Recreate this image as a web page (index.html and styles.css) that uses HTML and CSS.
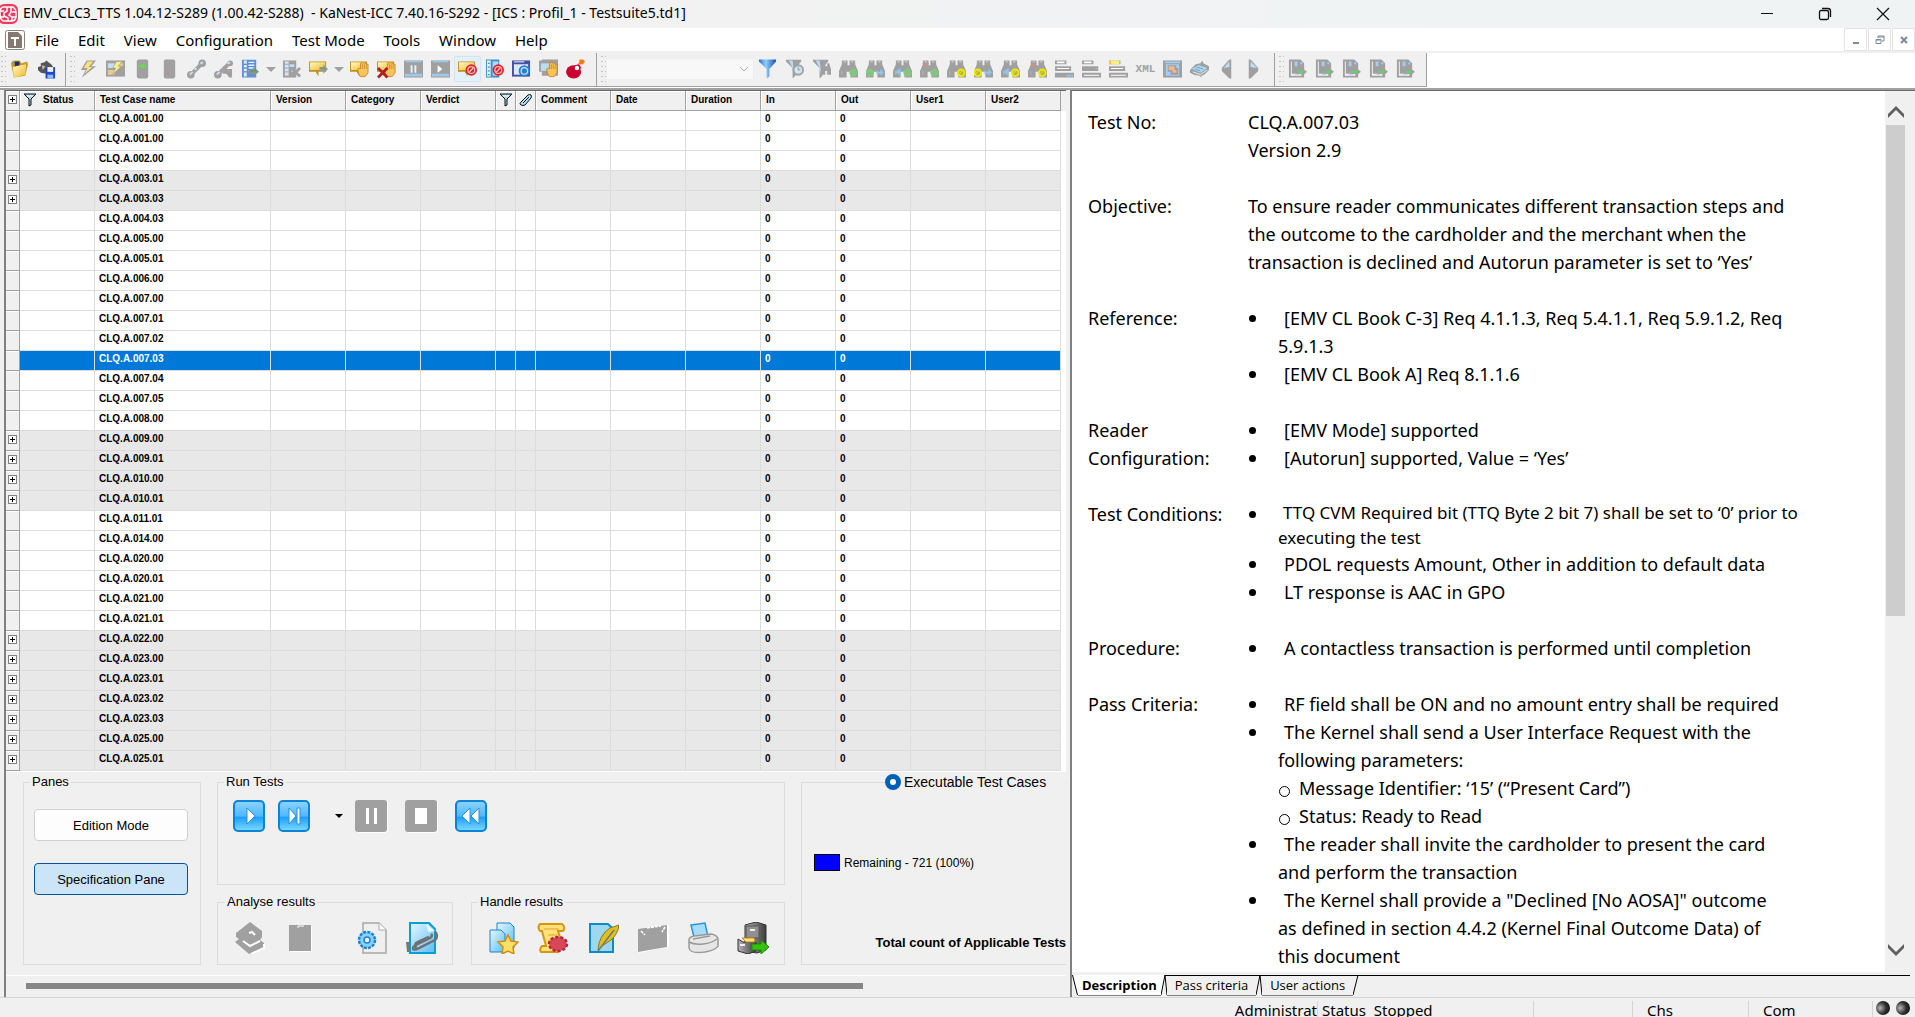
FILE: index.html
```html
<!DOCTYPE html>
<html lang="en">
<head>
    <meta charset="UTF-8">
    <meta name="viewport" content="width=device-width, initial-scale=1.0">
    <title>KaNest-ICC</title>
    <link rel="stylesheet" href="styles.css">
</head>
<body>
    <!-- Icon sprite -->
    <svg class="sprite" aria-hidden="true">
        <defs>
            <linearGradient id="gBlue" x1="0" y1="0" x2="0" y2="1">
                <stop offset="0" stop-color="#8fd4ff"/><stop offset=".5" stop-color="#4fb8ff"/><stop offset=".55" stop-color="#1e9ffb"/><stop offset="1" stop-color="#7fdcff"/>
            </linearGradient>
            <linearGradient id="gGold" x1="0" y1="0" x2="1" y2="1">
                <stop offset="0" stop-color="#fff9c4"/><stop offset="1" stop-color="#f2b92c"/>
            </linearGradient>
            <linearGradient id="gPage" x1="0" y1="0" x2="1" y2="1">
                <stop offset="0" stop-color="#e8f7ff"/><stop offset="1" stop-color="#58bdf5"/>
            </linearGradient>
            <linearGradient id="gMetal" x1="0" y1="0" x2="1" y2="0">
                <stop offset="0" stop-color="#b5b5b5"/><stop offset="1" stop-color="#3c3c3c"/>
            </linearGradient>
            <linearGradient id="gFunnel" x1="0" y1="0" x2="1" y2="0">
                <stop offset="0" stop-color="#2a6fc0"/><stop offset=".4" stop-color="#8fd0ff"/><stop offset="1" stop-color="#1b4fa8"/>
            </linearGradient>
            <radialGradient id="gLed" cx=".3" cy=".5" r=".7">
                <stop offset="0" stop-color="#b8b8b8"/><stop offset=".6" stop-color="#333"/><stop offset="1" stop-color="#111"/>
            </radialGradient>
        </defs>
        <symbol id="i-open" viewBox="0 0 20 20"><path d="M1 4l3-3h6l2 3 6-2 1 3-3 12-12 2z" fill="#c99b2e"/><path d="M3 8l14-3-1 11-12 3z" fill="url(#gGold)"/><path d="M5 2h5v4l-5 1z" fill="#1b2f66"/><path d="M2 2h2v2H2z" fill="#55a0d0"/></symbol>
        <symbol id="i-save" viewBox="0 0 20 20"><path d="M1 8l3-1V4l4-1 2-2 2 2 3 2 2 3-2 4-5 3-6-1-3-3z" fill="#555"/><path d="M5 6l4 1-3 4z" fill="#bbb"/><path d="M9 8h10v12H9z" fill="#1f49c8"/><path d="M11 8h6v5h-6z" fill="#eef4ff"/><path d="M11 16h6v4h-6z" fill="#8fb8ff"/></symbol>
        <symbol id="i-bolt" viewBox="0 0 20 20"><path d="M8 1h10l-5 6h5L3 19l4-8H2z" fill="#a0a0a0"/><path d="M9 2h6l-5 6h4L6 15l3-6H5z" fill="#fbe27a"/></symbol>
        <symbol id="i-boltwin" viewBox="0 0 20 20"><path d="M0 1h20v17H0z" fill="#a0a0a0"/><path d="M2 4h7v5H2z" fill="#bfe0fa"/><path d="M2 11h7v5H2zM14 4h4v3h-4z" fill="#e6cf85"/><path d="M11 2h6l-4 5h3l-9 9 3-7H7z" fill="#ffee88" stroke="#999" stroke-width=".6"/></symbol>
        <symbol id="i-devon" viewBox="0 0 20 20"><rect x="4" y="0" width="12" height="20" rx="2" fill="#a0a0a0"/><path d="M6 6h4V4l4 3-4 3V8H6z" fill="#5bea3c"/></symbol>
        <symbol id="i-devoff" viewBox="0 0 20 20"><rect x="4" y="0" width="12" height="20" rx="2" fill="#a0a0a0"/><path d="M6 14h4v1H6z" fill="#f08060"/></symbol>
        <symbol id="i-link" viewBox="0 0 20 20"><path d="M4 16L16 4" stroke="#a0a0a0" stroke-width="4"/><circle cx="4" cy="16" r="4" fill="#a0a0a0"/><circle cx="16" cy="4" r="4" fill="#a0a0a0"/><path d="M3 16l3-3M14 4l3-1M8 11l2-2" stroke="#d4dcf4" stroke-width="2"/></symbol>
        <symbol id="i-unlink" viewBox="0 0 20 20"><path d="M4 16L16 4" stroke="#a0a0a0" stroke-width="4"/><circle cx="4" cy="16" r="4" fill="#a0a0a0"/><circle cx="17" cy="4" r="3" fill="#a0a0a0"/><path d="M9 10h10v9h-3l-3-4H9z" fill="#a0a0a0"/><path d="M3 16l3-3M14 4l3-1" stroke="#d4dcf4" stroke-width="2"/><path d="M8 10l2 2M14 11l3 2" stroke="#f09090"/></symbol>
        <symbol id="i-list" viewBox="0 0 20 20"><path d="M1 0h15v19H1z" fill="#5d92d8"/><path d="M3 1h3v17H3z" fill="#dfeeff"/><path d="M3 5h3M3 9h3M3 13h3" stroke="#335fae"/><path d="M8 3h6M8 6h6M8 9h6M8 12h4" stroke="#e8f2ff" stroke-width="1.5"/></symbol>
        <symbol id="i-listrun" viewBox="0 0 20 20"><use href="#i-list"/><path d="M8 11h5V8l6 5-6 5v-3H8z" fill="#909090"/><path d="M10 12h5v-2l3 3" stroke="#38b040" fill="none"/></symbol>
        <symbol id="i-listx" viewBox="0 0 20 20"><path d="M1 1h14v18H1z" fill="#a0a0a0"/><path d="M3 2h4v15H3z" fill="#cfe6fa"/><path d="M3 5h4M3 9h4M3 13h4" stroke="#a0a0a0"/><path d="M8 5h5v3H8zM10 10h4v3h-4z" fill="#b8e0fa"/><path d="M10 9l9 9M19 9l-9 9" stroke="#a0a0a0" stroke-width="3"/></symbol>
        <symbol id="i-msg" viewBox="0 0 20 20"><path d="M0 2h18v11H10v5l-3-5H0z" fill="#c08f1d"/><path d="M1 3h16v8H1z" fill="url(#gGold)"/></symbol>
        <symbol id="i-msgrun" viewBox="0 0 20 20"><use href="#i-msg"/><path d="M11 8h4V5l5 5-5 5v-3h-4z" fill="#9a9a9a"/><path d="M12 9h4l2 2" stroke="#42b048" fill="none"/></symbol>
        <symbol id="i-hand" viewBox="0 0 20 20"><path d="M9 15l-1-5 2-1 1 1V4l2-1 1 1 2-1 1 2 2 0v9l-3 4h-5z" fill="#f8c45a" stroke="#c07818" stroke-width=".8"/><path d="M13 5v5M15 5v5M17 6v4" stroke="#c07818" stroke-width=".7"/></symbol>
        <symbol id="i-msghand" viewBox="0 0 20 20"><use href="#i-msg"/><use href="#i-hand"/></symbol>
        <symbol id="i-msghandx" viewBox="0 0 20 20"><use href="#i-msg"/><use href="#i-hand"/><path d="M1 9l10 10M11 9L1 19" stroke="#b02020" stroke-width="3"/></symbol>
        <symbol id="i-pausebox" viewBox="0 0 20 20"><path d="M0 1h20v18H0z" fill="#a0a0a0"/><path d="M2 1h16v2H2zM1 15h18v3H1z" fill="#9fc8ea"/><path d="M7 6h2v8H7zM11 6h2v8h-2z" fill="#e8f4fc"/></symbol>
        <symbol id="i-playbox" viewBox="0 0 20 20"><path d="M0 1h20v18H0z" fill="#a0a0a0"/><path d="M2 1h16v2H2zM1 15h18v3H1z" fill="#9fc8ea"/><path d="M7 6l5 4-5 4z" fill="#fff"/></symbol>
        <symbol id="i-no" viewBox="0 0 20 20"><circle cx="14" cy="11" r="6" fill="#d8242c"/><circle cx="14" cy="11" r="3.6" fill="none" stroke="#ffb8b8" stroke-width="1.3"/><path d="M12 13l4-4" stroke="#ffc8c8" stroke-width="1.3"/></symbol>
        <symbol id="i-msgstop" viewBox="0 0 20 20"><use href="#i-msg"/><use href="#i-no"/></symbol>
        <symbol id="i-liststop" viewBox="0 0 20 20"><path d="M1 0h14v19H1z" fill="#3f90c8"/><path d="M2 1h4v17H2z" fill="#d8f0ff"/><path d="M3 4h2M3 8h2M3 12h2M3 16h2" stroke="#2a70a8"/><path d="M8 2h6v15H8z" fill="#a8dcf8"/><use href="#i-no"/></symbol>
        <symbol id="i-wingear" viewBox="0 0 20 20"><path d="M0 1h19v17H0z" fill="#4450a0"/><path d="M2 5h15v11H2z" fill="#dfe8fb"/><path d="M2 2h11v1H2z" fill="#fff"/><circle cx="13" cy="12" r="6" fill="#2a7fd4"/><circle cx="13" cy="12" r="3.4" fill="none" stroke="#bfe6ff" stroke-width="1.3"/></symbol>
        <symbol id="i-winhand" viewBox="0 0 20 20"><path d="M0 1h17v12H0zM3 0h17v17H3z" fill="#a0a0a0"/><path d="M2 4h14v8H2z" fill="#b8dcf0"/><use href="#i-hand"/></symbol>
        <symbol id="i-bomb" viewBox="0 0 20 20"><ellipse cx="8" cy="13" rx="8" ry="7" fill="#cc0030"/><path d="M9 6l5-1 2 4-4 3z" fill="#cc0030"/><circle cx="11.500" cy="9" r="2.300" fill="#fff"/><path d="M12 6l3-3" stroke="#c03020"/><path d="M14 0h4l2 2-2 3h-4z" fill="#ff7a00"/></symbol>
        <symbol id="i-funnel" viewBox="0 0 20 20"><path d="M1 0h18v2l-7 8v8l-3 2v-10L1 2z" fill="url(#gFunnel)"/></symbol>
        <symbol id="i-gfunnel" viewBox="0 0 20 20"><path d="M1 0h16v2l-6 7v8l-3 3V9L1 2z" fill="#a0a0a0"/><path d="M4 1h4l2 15-2-7z" fill="#b4dcf8"/></symbol>
        <symbol id="i-funneleye" viewBox="0 0 20 20"><use href="#i-gfunnel"/><circle cx="14" cy="11" r="6" fill="#a0a0a0"/><circle cx="14" cy="11" r="4" fill="#cfe6f6"/><path d="M14 8v3h2" stroke="#7a9ab0" fill="none"/></symbol>
        <symbol id="i-funnelbino" viewBox="0 0 20 20"><use href="#i-gfunnel"/><path d="M10 7l2-3h2v3h2V4h2l2 6v6h-4v-4h-2v4h-4z" fill="#a0a0a0"/></symbol>
        <symbol id="i-bino" viewBox="0 0 20 20"><path d="M0 12l3-7V1h6v5h2V1h6v4l3 7v7h-8v-6H8v6H0z" fill="#a0a0a0"/><path d="M5 2h2v1H5zM13 2h2v1h-2z" fill="#f0f0f0"/><path d="M3 12v4M12 12v5" stroke="#bcbcbc"/></symbol>
        <symbol id="i-green" viewBox="0 0 20 20"><circle cx="15" cy="14" r="3.500" fill="#a8a8a8" stroke="#66e060" stroke-width="1.500" stroke-dasharray="4 1"/><path d="M13 13h3v3" stroke="#66e060" fill="none"/></symbol>
        <symbol id="i-yellow" viewBox="0 0 20 20"><circle cx="15" cy="14" r="3.500" fill="#b8b060" stroke="#ecec00" stroke-width="2"/><path d="M13 15l3-3" stroke="#ecec00" fill="none"/></symbol>
        <symbol id="i-bino1" viewBox="0 0 20 20"><use href="#i-bino"/><use href="#i-green"/></symbol>
        <symbol id="i-bino2" viewBox="0 0 20 20"><use href="#i-bino"/><use href="#i-green" x="-11"/><path d="M11 13h4v-3l4 4-4 3v-2h-4z" fill="#8cc4f4"/></symbol>
        <symbol id="i-bino3" viewBox="0 0 20 20"><use href="#i-bino"/><path d="M2 13l6-4v8z" fill="#8cc4f4"/><use href="#i-green"/></symbol>
        <symbol id="i-bino4" viewBox="0 0 20 20"><use href="#i-bino"/><path d="M3 4l3 3M6 4L3 7M9 4l-2 3" stroke="#f08080"/><use href="#i-green"/></symbol>
        <symbol id="i-bino5" viewBox="0 0 20 20"><use href="#i-bino"/><use href="#i-yellow"/></symbol>
        <symbol id="i-bino6" viewBox="0 0 20 20"><use href="#i-bino"/><use href="#i-yellow" x="-11"/><path d="M11 13h4v-3l4 4-4 3v-2h-4z" fill="#8cc4f4"/></symbol>
        <symbol id="i-bino7" viewBox="0 0 20 20"><use href="#i-bino"/><path d="M2 13l6-4v8z" fill="#8cc4f4"/><use href="#i-yellow"/></symbol>
        <symbol id="i-bino8" viewBox="0 0 20 20"><use href="#i-bino"/><path d="M3 4l3 3M6 4L3 7M9 4l-2 3" stroke="#f08080"/><use href="#i-yellow"/></symbol>
        <symbol id="i-bars" viewBox="0 0 20 20"><path d="M0 1h12v4H0zM0 7h17v5H0zM0 14h20v5H0z" fill="#a0a0a0"/><path d="M2 2h8v2H2zM2 9h13v1H2zM2 16h16v1H2z" fill="#fff"/></symbol>
        <symbol id="i-bars1" viewBox="0 0 20 20"><use href="#i-bars"/><path d="M0 15h19v3H0z" fill="#a0a0a0"/><path d="M12 16h7v2h-7z" fill="#8cc4f4"/></symbol>
        <symbol id="i-bars2" viewBox="0 0 20 20"><use href="#i-bars"/><path d="M0 8h17v3H0z" fill="#a0a0a0"/><path d="M14 9h2v2h-2z" fill="#80d080"/></symbol>
        <symbol id="i-bars3" viewBox="0 0 20 20"><use href="#i-bars"/><path d="M1 1h10v4H1z" fill="#ffee80"/><path d="M0 1h2v4H0z" fill="#f8c050"/></symbol>
        <symbol id="i-wins" viewBox="0 0 20 20"><path d="M0 1h20v18H0z" fill="#a0a0a0"/><path d="M2 2h16v2H2zM3 5h14v12H3z" fill="#9cd0fc"/><path d="M5 6h9v7H5zM8 9h8v7H8z" fill="#a0a0a0"/><path d="M6 7h6v4H6zM10 11h4v3h-4z" fill="#f4b888"/></symbol>
        <symbol id="i-book" viewBox="0 0 20 20"><path d="M0 11l6-6 5-1 2-3 1 3 6 3v4l-5 5-3 1v2l-2-2-6-1-4-2z" fill="#a0a0a0"/><path d="M2 10l7-4 9 3-7 5z" fill="#a8dcfc"/><path d="M3 13l8 3 7-5" stroke="#e8f6ff" fill="none"/><path d="M7 8l7 2M5 10l6 2" stroke="#7898a8"/></symbol>
        <symbol id="i-prev" viewBox="0 0 20 20"><path d="M15 0v20h-2L5 12V9l8-9z" fill="#a0a0a0"/><path d="M13 2v6L7 9z" fill="#b8e0fc"/></symbol>
        <symbol id="i-next" viewBox="0 0 20 20"><path d="M5 0v20h2l8-8V9L7 0z" fill="#a0a0a0"/><path d="M7 2v6l7 1z" fill="#b8e0fc"/></symbol>
        <symbol id="i-doc" viewBox="0 0 20 20"><path d="M1 0h12l4 4v15H1z" fill="#a0a0a0"/><path d="M3 2h1v15H3zM4 15h10v2H4z" fill="#f4f4f4"/><path d="M7 2h3v5H7zM13 3h2v2h-2zM7 15h5v1H7z" fill="#a4cdf4"/><path d="M9 11h6V9l5 4-5 4v-2H9z" fill="#a0a0a0"/><path d="M10 12h4v-1l3 2-3 2v-1h-4z" fill="#5cd860"/></symbol>
        <symbol id="i-hfunnel" viewBox="0 0 14 14"><path d="M1 1h12L8 6v6l-2 1V6z" fill="#9ed8ec" stroke="#111"/><path d="M4 3h6" stroke="#fff"/></symbol>
        <symbol id="i-hclip" viewBox="0 0 14 14"><path d="M2 9l7-7q2-1 3 0t0 3l-6 7q-2 1-4 0t0-3z" fill="#a8dff5" stroke="#111"/><path d="M4 10l6-6" stroke="#111"/></symbol>
    </svg>

    <header class="titlebar">
        <svg class="app-icon" viewBox="0 0 20 20"><rect x="-2" y="0" width="20" height="20" rx="6" fill="#f5385f"/><path d="M3 3h10q3 2 3 6v4q-1 4-4 4H3q-3-2-3-6V8q0-4 3-5M7 3v4l-3 2v3l4 2v3M11 3v5l-2 3 3 2v4M0 7h4M12 8h4M0 13h4M12 13h4" fill="none" stroke="#fff" stroke-width="1.500"/></svg>
        <h1>EMV_CLC3_TTS 1.04.12-S289 (1.00.42-S288)&nbsp; - KaNest-ICC 7.40.16-S292 - [ICS : Profil_1 - Testsuite5.td1]</h1>
        <div class="win-buttons">
            <button aria-label="Minimize"><svg viewBox="0 0 14 14"><path d="M1 6.500h12" stroke="#111"/></svg></button>
            <button aria-label="Restore"><svg viewBox="0 0 14 14"><rect x="1.500" y="3.500" width="9" height="9" rx="1.500" fill="none" stroke="#111" stroke-width="1.300"/><path d="M4 1.500h6q2.500 0 2.500 2.500v6" fill="none" stroke="#111" stroke-width="1.300"/></svg></button>
            <button aria-label="Close"><svg viewBox="0 0 14 14"><path d="M1 1l12 12M13 1L1 13" stroke="#111" stroke-width="1.200"/></svg></button>
        </div>
    </header>

    <nav class="menubar">
        <svg class="doc-icon" viewBox="0 0 20 20"><rect x=".5" y=".5" width="19" height="19" rx="2" fill="#fff" stroke="#8a7f7a"/><path d="M3 2h10l4 4v12H3z" fill="#857870"/><path d="M6 7h8v2h-3v7H9V9H6z" fill="#fff"/></svg>
        <a href="#">File</a>
        <a href="#">Edit</a>
        <a href="#">View</a>
        <a href="#">Configuration</a>
        <a href="#">Test Mode</a>
        <a href="#">Tools</a>
        <a href="#">Window</a>
        <a href="#">Help</a>
        <div class="mdi-buttons">
            <button aria-label="Minimize document"><svg viewBox="0 0 10 10"><path d="M2 7h6v2H2z" fill="#7d8b99"/></svg></button>
            <button aria-label="Restore document"><svg viewBox="0 0 10 10"><path d="M3 3V1h6v5H7M3 2h6M1 4.500h5v4H1zM1 5h5" fill="none" stroke="#7d8b99"/></svg></button>
            <button aria-label="Close document"><svg viewBox="0 0 10 10"><path d="M2 2l6 6M8 2L2 8" stroke="#7d8b99" stroke-width="2"/></svg></button>
        </div>
    </nav>

    <div class="toolbars" id="toolbars">
        <div class="toolbar" data-icons="open save"></div>
        <div class="toolbar" data-icons="bolt boltwin devon devoff link unlink listrun | listx msgrun | msghand msghandx pausebox playbox msgstop* liststop wingear winhand bomb"></div>
        <div class="toolbar" data-icons="combo funnel funneleye funnelbino bino1 bino2 bino3 bino4 bino5 bino6 bino7 bino8 bars1 bars2 bars3 xml wins book prev next"></div>
        <div class="toolbar" data-icons="doc doc doc doc doc"></div>
    </div>

    <main class="workspace">
        <section class="left-pane">
            <div class="table-wrap">
                <table class="cases">
                    <colgroup>
                        <col class="c-exp"><col class="c-std"><col class="c-name"><col class="c-std"><col class="c-std"><col class="c-std"><col class="c-ico"><col class="c-ico"><col class="c-std"><col class="c-std"><col class="c-std"><col class="c-std"><col class="c-std"><col class="c-std"><col class="c-std">
                    </colgroup>
                    <thead>
                        <tr>
                            <th class="exp"><button class="plus" aria-label="Expand all"></button></th>
                            <th class="status"><svg><use href="#i-hfunnel"/></svg>Status</th>
                            <th>Test Case name</th>
                            <th>Version</th>
                            <th>Category</th>
                            <th>Verdict</th>
                            <th class="ico"><svg><use href="#i-hfunnel"/></svg></th>
                            <th class="ico"><svg><use href="#i-hclip"/></svg></th>
                            <th>Comment</th>
                            <th>Date</th>
                            <th>Duration</th>
                            <th>In</th>
                            <th>Out</th>
                            <th>User1</th>
                            <th>User2</th>
                        </tr>
                    </thead>
                    <tbody id="caseRows"></tbody>
                </table>
            </div>

            <div class="controls">
                <fieldset class="panes">
                    <legend>Panes</legend>
                    <button class="pane-btn">Edition Mode</button>
                    <button class="pane-btn active">Specification Pane</button>
                </fieldset>

                <div class="middle">
                    <fieldset class="run">
                        <legend>Run Tests</legend>
                        <button class="run-btn" aria-label="Run"><svg viewBox="0 0 32 32"><rect x="1" y="1" width="30" height="30" rx="4" fill="url(#gBlue)" stroke="#0a84d8" stroke-width="2"/><path d="M14 8v16l8-8z" fill="#fff" stroke="#2a8fd8"/></svg></button>
                        <button class="run-btn" aria-label="Run to end"><svg viewBox="0 0 32 32"><rect x="1" y="1" width="30" height="30" rx="4" fill="url(#gBlue)" stroke="#0a84d8" stroke-width="2"/><path d="M11 8v16l7-8zM19 8h3v16h-3z" fill="#fff" stroke="#2a8fd8"/></svg></button>
                        <button class="run-drop" aria-label="Run options"><svg viewBox="0 0 8 5"><path d="M0 0h8L4 4z" fill="#000"/></svg></button>
                        <button class="run-btn" aria-label="Pause"><svg viewBox="0 0 32 32"><rect x="1" y="1" width="32" height="32" rx="4" fill="#fff"/><rect width="32" height="32" rx="3" fill="#a0a0a0"/><path d="M11 8h3v16h-3zM19 8h3v16h-3z" fill="#fff"/></svg></button>
                        <button class="run-btn wide" aria-label="Stop"><svg viewBox="0 0 32 32"><rect x="1" y="1" width="32" height="32" rx="4" fill="#fff"/><rect width="32" height="32" rx="3" fill="#a0a0a0"/><path d="M10 8h12v16H10z" fill="#fff"/></svg></button>
                        <button class="run-btn wide" aria-label="Rewind"><svg viewBox="0 0 32 32"><rect x="1" y="1" width="30" height="30" rx="4" fill="url(#gBlue)" stroke="#0a84d8" stroke-width="2"/><path d="M15 8v16l-8-8zM24 8v16l-8-8z" fill="#fff" stroke="#2a8fd8"/></svg></button>
                    </fieldset>
                    <div class="results">
                        <fieldset class="analyse">
                            <legend>Analyse results</legend>
                            <button class="res-btn" aria-label="Compare logs"><svg viewBox="0 0 32 32"><path d="M2 11L16 0l12 9v6l-2 3 4 3v5L15 32 1 20l4-3-3-2z" fill="#a0a0a0"/><path d="M9 19l7 5 10-5M17 32l13-6v-4M15 11l3-1 3 3" fill="none" stroke="#fff" stroke-width="2"/></svg></button>
                            <button class="res-btn" aria-label="Clipboard"><svg viewBox="0 0 32 32"><path d="M6 4h22v26H6z" fill="#fff"/><path d="M5 3h22v26H5z" fill="#a0a0a0"/><path d="M14 6V4h6" fill="none" stroke="#fff"/></svg></button>
                            <button class="res-btn gap" aria-label="Log settings"><svg viewBox="0 0 32 32"><path d="M7 1h16l7 7v23H7z" fill="#efefef" stroke="#a8a8a8" stroke-width="1.500"/><path d="M23 1v7h7" fill="#fff" stroke="#a8a8a8"/><circle cx="11" cy="18" r="8" fill="#8ad0fb" stroke="#1b84cf" stroke-width="2.500" stroke-dasharray="3 1.200"/><circle cx="11" cy="18" r="3" fill="#eef" stroke="#1b84cf" stroke-width="1.500"/></svg></button>
                            <button class="res-btn" aria-label="Attach"><svg viewBox="0 0 32 32"><path d="M4 1h19l6 6v24H4z" fill="url(#gPage)" stroke="#0a9fd4" stroke-width="2"/><path d="M20 2l2 8 7-1z" fill="#e8f8ff"/><path d="M8 24l16-8q3-2 1-4M8 24q-3 5 3 3l18-9q4-4 0-8M10 26q-2-5 2-6l11-5" fill="none" stroke="#707070" stroke-width="2.500"/><path d="M0 20h3v10H1z" fill="#777"/></svg></button>
                        </fieldset>
                        <fieldset class="handle">
                            <legend>Handle results</legend>
                            <button class="res-btn" aria-label="New report"><svg viewBox="0 0 32 32"><path d="M10 1h13l4 4v21H10z" fill="url(#gPage)" stroke="#1b84cf"/><path d="M3 8h11l4 4v18H3z" fill="url(#gPage)" stroke="#1b84cf"/><path d="M21 13l3 6 7 1-5 5 1 7-6-3-6 3 1-7-5-5 7-1z" fill="#ffe066" stroke="#d08c10" stroke-width="1.500"/></svg></button>
                            <button class="res-btn" aria-label="Certificate"><svg viewBox="0 0 32 32"><path d="M3 2h22q4 3 1 7h-5l4 12-4 9H4q-2-3 1-6h4L5 9H3q-3-4 0-7z" fill="#ffe27a" stroke="#d99510" stroke-width="2"/><path d="M7 7h15M11 13h9M12 18h6" stroke="#e0a028"/><ellipse cx="21" cy="22" rx="9" ry="7" fill="#d84858" stroke="#b02840" stroke-width="2.500" stroke-dasharray="3 2"/></svg></button>
                            <button class="res-btn" aria-label="Edit"><svg viewBox="0 0 32 32"><path d="M3 2h18l5 5v23H3z" fill="#9ed8ee" stroke="#0a8cc4" stroke-width="2"/><path d="M11 28Q12 13 23 6l9-3q-1 9-8 15l-9 6z" fill="#e0c020" stroke="#8a7a20"/><path d="M11 29L27 8" stroke="#777" stroke-width="1.500"/></svg></button>
                            <button class="res-btn" aria-label="Mail"><svg viewBox="0 0 32 32"><path d="M2 8l30-5v22L2 31z" fill="#fff"/><path d="M1 7l29-4v22L1 30z" fill="#a0a0a0"/><path d="M4 9l4 4M28 5l-3 5M10 6l14-2" stroke="#fff" stroke-width="1.500" stroke-dasharray="3 1"/></svg></button>
                            <button class="res-btn" aria-label="Print"><svg viewBox="0 0 32 32"><path d="M4 3l14-2 3 14H7z" fill="#a5dcff" stroke="#2a94d8" stroke-width="1.500"/><path d="M2 18q0-3 5-4l17-2q6 1 7 5v7q-2 4-13 6-15 2-16-4z" fill="#e6e6e6" stroke="#999" stroke-width="1.500"/><path d="M2 20q5 3 14 2t14-5M6 17l17-3" fill="none" stroke="#999" stroke-width="1.500"/></svg></button>
                            <button class="res-btn" aria-label="Archive"><svg viewBox="0 0 32 32"><path d="M8 3l11-3 10 3v25l-9 3-12-2z" fill="url(#gMetal)" stroke="#333"/><path d="M9 4h13v12H9z" fill="#909090" stroke="#555"/><path d="M1 17l5 3h13v9l-8 3-10-3z" fill="url(#gMetal)" stroke="#333"/><path d="M5 16h12l1 4H9z" fill="#ffe27a" stroke="#c08c20"/><path d="M3 23h5M13 8h5" stroke="#eee" stroke-width="2"/><path d="M15 22h9v-4l8 7-8 7v-4h-9z" fill="#37c211" stroke="#1d8a08"/></svg></button>
                        </fieldset>
                    </div>
                </div>

                <fieldset class="summary">
                    <legend><input type="radio" id="execCases" name="scope" checked><label for="execCases">Executable Test Cases</label></legend>
                    <p class="remaining"><span class="swatch"></span>Remaining - 721 (100%)</p>
                    <p class="total">Total count of Applicable Tests</p>
                </fieldset>
            </div>

            <div class="hscroll"><div class="hthumb"></div></div>
        </section>

        <section class="right-pane">
            <div class="doc-area">
                <dl class="spec">
                    <dt>Test No:</dt>
                    <dd>CLQ.A.007.03<br>Version 2.9</dd>
                    <dt>Objective:</dt>
                    <dd>To ensure reader communicates different transaction steps and<br>the outcome to the cardholder and the merchant when the<br>transaction is declined and Autorun parameter is set to ‘Yes’</dd>
                    <dt>Reference:</dt>
                    <dd>
                        <ul>
                            <li>[EMV CL Book C-3] Req 4.1.1.3, Req 5.4.1.1, Req 5.9.1.2, Req<br>5.9.1.3</li>
                            <li>[EMV CL Book A] Req 8.1.1.6</li>
                        </ul>
                    </dd>
                    <dt>Reader<br>Configuration:</dt>
                    <dd>
                        <ul>
                            <li>[EMV Mode] supported</li>
                            <li>[Autorun] supported, Value = ‘Yes’</li>
                        </ul>
                    </dd>
                    <dt>Test Conditions:</dt>
                    <dd>
                        <ul>
                            <li class="small">TTQ CVM Required bit (TTQ Byte 2 bit 7) shall be set to ‘0’ prior to<br>executing the test</li>
                            <li>PDOL requests Amount, Other in addition to default data</li>
                            <li>LT response is AAC in GPO</li>
                        </ul>
                    </dd>
                    <dt>Procedure:</dt>
                    <dd>
                        <ul>
                            <li>A contactless transaction is performed until completion</li>
                        </ul>
                    </dd>
                    <dt>Pass Criteria:</dt>
                    <dd>
                        <ul>
                            <li>RF field shall be ON and no amount entry shall be required</li>
                            <li>The Kernel shall send a User Interface Request with the<br>following parameters:
                                <ul class="sub">
                                    <li>Message Identifier: ‘15’ (“Present Card”)</li>
                                    <li>Status: Ready to Read</li>
                                </ul>
                            </li>
                            <li>The reader shall invite the cardholder to present the card<br>and perform the transaction</li>
                            <li>The Kernel shall provide a "Declined [No AOSA]" outcome<br>as defined in section 4.4.2 (Kernel Final Outcome Data) of<br>this document</li>
                        </ul>
                    </dd>
                </dl>
                <div class="vscroll">
                    <button aria-label="Scroll up"><svg viewBox="0 0 18 12"><path d="M1 8l8-8 8 8v4L9 4l-8 8z" fill="#606060"/></svg></button>
                    <div class="vtrack"><div class="vthumb"></div></div>
                    <button class="down" aria-label="Scroll down"><svg viewBox="0 0 18 12"><path d="M1 4l8 8 8-8V0L9 8 1 0z" fill="#606060"/></svg></button>
                </div>
            </div>
            <div class="tabs">
                <svg class="slant first" viewBox="0 0 6 21"><path d="M0 0h6v21z" fill="#fff"/><path d="M.5 0l5 20" stroke="#000" fill="none"/></svg>
                <a href="#" class="tab active">Description</a>
                <svg class="slant" viewBox="0 0 6 21"><path d="M0 0h4L0 20z" fill="#fff"/><path d="M0 20L4 0l2 20M4 .5h2" stroke="#000" fill="none"/></svg>
                <a href="#" class="tab">Pass criteria</a>
                <svg class="slant" viewBox="0 0 6 21"><path d="M0 20L4 0l2 20M0 .5h6" stroke="#000" fill="none"/></svg>
                <a href="#" class="tab">User actions</a>
                <svg class="slant" viewBox="0 0 6 21"><path d="M0 20L5 0M0 .5h6" stroke="#000" fill="none"/></svg>
                <span class="tab-rest"></span>
            </div>
        </section>
    </main>

    <footer class="statusbar">
        <span class="s-user">Administrat</span>
        <span class="s-state">Status&nbsp; Stopped</span>
        <span class="s-empty"></span>
        <span class="s-chs">Chs</span>
        <span class="s-com">Com</span>
        <span class="s-leds"><svg viewBox="0 0 34 14"><circle cx="7" cy="7" r="7" fill="url(#gLed)"/><circle cx="27" cy="7" r="7" fill="url(#gLed)"/></svg></span>
    </footer>

    <script>
        // Test cases of the current suite, "+" marks the ones that can be expanded
        const cases = [
            "001.00", "001.00", "002.00", "+003.01", "+003.03", "004.03", "005.00", "005.01",
            "006.00", "007.00", "007.01", "007.02", "007.03", "007.04", "007.05", "008.00",
            "+009.00", "+009.01", "+010.00", "+010.01", "011.01", "014.00", "020.00", "020.01",
            "021.00", "021.01", "+022.00", "+023.00", "+023.01", "+023.02", "+023.03", "+025.00", "+025.01"
        ];
        const selected = "007.03";

        function renderRows() {
            const tbody = document.getElementById("caseRows");
            cases.forEach(item => {
                const group = item.startsWith("+");
                const id = item.replace("+", "");
                const row = document.createElement("tr");
                if (group) row.className = "group";
                if (id === selected) row.className = "selected";
                row.innerHTML = `
                    <td class="exp">${group ? '<button class="plus" aria-label="Expand"></button>' : ''}</td>
                    <td></td><td>CLQ.A.${id}</td>
                    <td></td><td></td><td></td><td></td><td></td><td></td><td></td><td></td>
                    <td>0</td><td>0</td><td></td><td></td>`;
                tbody.appendChild(row);
            });
        }

        function renderToolbars() {
            document.querySelectorAll(".toolbar").forEach(bar => {
                let html = '<span class="grip"></span>';
                bar.dataset.icons.split(" ").forEach(name => {
                    if (name === "|") {
                        html += '<button class="drop" aria-label="More"></button>';
                    } else if (name === "combo") {
                        html += '<div class="filter-box"><select class="filter" aria-label="Filter"><option></option></select><svg viewBox="0 0 10 6"><path d="M1 1l4 4 4-4" fill="none" stroke="#b0b0b0"/></svg></div>';
                    } else if (name === "xml") {
                        html += '<button class="tool xml">XML</button>';
                    } else {
                        const on = name.endsWith("*");
                        const id = name.replace("*", "");
                        html += `<button class="tool${on ? ' on' : ''}" aria-label="${id}"><svg><use href="#i-${id}"/></svg></button>`;
                    }
                });
                bar.innerHTML = html;
            });
        }

        renderRows();
        renderToolbars();
    </script>
</body>
</html>
```
FILE: styles.css
```css
* {
    box-sizing: border-box;
}

body {
    margin: 0;
    height: 100vh;
    display: flex;
    flex-direction: column;
    overflow: hidden;
    background: #f0f0f0;
    color: #000;
    font-family: "Liberation Sans", Arial, sans-serif;
    font-size: 13px;
}

button {
    border: none;
    background: none;
    padding: 0;
    font-family: inherit;
    font-size: inherit;
    color: inherit;
}

svg {
    display: block;
}

.sprite {
    position: absolute;
    width: 0;
    height: 0;
}

/* Title bar */
.titlebar {
    display: flex;
    align-items: center;
    height: 28px;
    flex: none;
    background: linear-gradient(to right, #f3f2f2, #f1f2f3 60%, #eff3f4 75%);
    font-family: "Noto Sans", "Open Sans", sans-serif;
}

.app-icon {
    width: 20px;
    height: 20px;
    margin-right: 3px;
}

.titlebar h1 {
    margin: 0;
    font-size: 14px;
    line-height: 26px;
    height: 28px;
    font-weight: normal;
    white-space: nowrap;
}

.win-buttons {
    margin-left: auto;
    display: flex;
    padding-right: 3px;
}

.win-buttons button {
    width: 58px;
    height: 26px;
    display: flex;
    align-items: center;
    justify-content: center;
}

.win-buttons svg {
    width: 14px;
    height: 14px;
}

/* Menu */
.menubar {
    display: flex;
    align-items: center;
    height: 25px;
    flex: none;
    padding-left: 5px;
    background: #fff;
    border-bottom: 2px solid #f0f0f0;
    font-family: "Noto Sans", "Open Sans", sans-serif;
    font-size: 15px;
    gap: 19px;
}

.menubar a {
    color: #000;
    text-decoration: none;
    line-height: 22px;
}

.doc-icon {
    width: 20px;
    height: 20px;
    margin-right: -9px;
}

.mdi-buttons {
    margin-left: auto;
    display: flex;
    gap: 1px;
}

.mdi-buttons button {
    width: 23px;
    height: 23px;
    border: 1px solid #e3e3e3;
    display: flex;
    align-items: center;
    justify-content: center;
}

.mdi-buttons svg {
    width: 10px;
    height: 10px;
}

/* Toolbars */
.toolbars {
    display: flex;
    height: 35px;
    flex: none;
    background: #fff;
}

.toolbar {
    display: flex;
    align-items: center;
    height: 34px;
    padding: 0 7px 1px 3px;
    background: #f0f0f0;
    border-right: 1px solid #a0a0a0;
    border-bottom: 1px solid #a0a0a0;
}

.toolbar:first-child {
    padding-left: 0;
    padding-right: 5px;
}

.grip {
    width: 6px;
    height: 30px;
    background: radial-gradient(circle, #c4c4c4 1px, transparent 1px) 0 0 / 4px 5px;
}

.tool {
    width: 27px;
    height: 26px;
    display: flex;
    align-items: center;
    justify-content: center;
}

.tool svg {
    width: 19px;
    height: 20px;
}

.tool.on {
    background: #e3f1fb;
    border: 1px solid #cfe6f8;
    border-radius: 2px;
}

.tool.xml {
    color: #a0a0a0;
    font-family: "Liberation Mono", monospace;
    font-size: 11px;
    font-weight: bold;
}

.drop {
    width: 14px;
    height: 26px;
    display: flex;
    align-items: center;
    justify-content: center;
}

.drop::before {
    content: "";
    border: 5px solid transparent;
    border-top-color: #a0a0a0;
    border-bottom: none;
}

.filter-box {
    position: relative;
}

.filter {
    display: block;
    width: 148px;
    height: 22px;
    border: 1px solid #ededed;
    background: #f8f8f8;
    appearance: none;
}

.filter-box svg {
    position: absolute;
    right: 5px;
    top: 8px;
    width: 10px;
    height: 6px;
}

/* Workspace */
.workspace {
    flex: 1;
    min-height: 0;
    display: flex;
    border-top: 2px solid #a0a0a0;
}

.left-pane {
    flex: 0 0 1062px;
    margin-left: 4px;
    display: flex;
    flex-direction: column;
    min-height: 0;
    overflow: hidden;
    border-left: 2px solid #808080;
    border-top: 1px solid #696969;
}

.table-wrap {
    flex: 1;
    min-height: 0;
    overflow: hidden;
    background: linear-gradient(#f0f0f0 20px, #fff 20px);
}

.cases {
    table-layout: fixed;
    width: 1055px;
    border-collapse: separate;
    border-spacing: 0;
    font-size: 10px;
    font-weight: bold;
}

.c-exp { width: 14px; }
.c-std { width: 75px; }
.c-name { width: 176px; }
.c-ico { width: 20px; }

.cases th,
.cases td {
    height: 20px;
    padding: 1px 0 4px 4px;
    line-height: 14px;
    text-align: left;
    vertical-align: top;
    white-space: nowrap;
    background: #fff;
    border-right: 1px solid #dcdcdc;
    border-bottom: 1px solid #dcdcdc;
}

.cases th {
    padding: 2px 0 2px 5px;
    background: #f0f0f0;
    border-right-color: #a0a0a0;
    border-bottom-color: #a0a0a0;
    box-shadow: inset 1px 1px #fff;
}

.cases th.status svg {
    float: left;
    width: 14px;
    height: 14px;
    margin-right: 6px;
}

.cases th.status {
    padding-left: 3px;
}

.cases th.ico {
    padding-left: 3px;
}

.cases th.ico svg {
    width: 14px;
    height: 14px;
}

.cases .group td {
    background: #e8e8e8;
}

.cases .selected td {
    background: #0078d7;
    color: #fff;
}

.cases tr th.exp,
.cases tr td.exp {
    padding: 4px 0 0 2px;
    background: #f0f0f0;
    border-right-color: #a0a0a0;
    border-bottom-color: #a0a0a0;
    box-shadow: inset 0 1px #fff;
}

.plus {
    display: block;
    width: 9px;
    height: 9px;
    border: 1px solid #808080;
    background: linear-gradient(#000, #000) center / 5px 1px no-repeat, linear-gradient(#000, #000) center / 1px 5px no-repeat, #fff;
}

/* Controls under the table */
.controls {
    flex: none;
    display: flex;
    padding: 2px 0 10px 17px;
    line-height: 16px;
    background: #f0f0f0;
}

fieldset {
    margin: 0;
    padding: 0;
    min-width: 0;
    border: 1px solid #dcdcdc;
}

legend {
    padding: 0 2px;
    line-height: 16px;
}

.panes {
    width: 178px;
    margin-right: 16px;
    padding: 19px 12px 0 10px;
}

.panes legend {
    margin-left: -4px;
}

.pane-btn {
    display: block;
    width: 100%;
    height: 32px;
    margin-bottom: 22px;
    border: 1px solid #d0d0d0;
    border-radius: 4px;
    background: #fdfdfd;
}

.pane-btn.active {
    background: #cce4f7;
    border-color: #0054a0;
}

.middle {
    width: 568px;
    margin-right: 16px;
    display: flex;
    flex-direction: column;
    gap: 9px;
}

.run legend,
.analyse legend,
.handle legend {
    margin-left: -9px;
}

.run {
    height: 111px;
    padding: 10px 0 0 15px;
}

.run-btn {
    float: left;
    width: 32px;
    height: 32px;
    margin-right: 13px;
}

.run-btn svg {
    width: 32px;
    height: 32px;
    overflow: visible;
}

.run-btn.wide {
    margin-left: 5px;
}

.run-drop {
    float: left;
    width: 32px;
    height: 32px;
    display: flex;
    align-items: center;
    justify-content: center;
}

.run-drop svg {
    width: 8px;
    height: 5px;
}

.results {
    display: flex;
    gap: 18px;
    height: 71px;
}

.analyse {
    width: 236px;
    padding: 12px 0 0 16px;
}

.handle {
    flex: 1;
    padding: 12px 0 0 15px;
}

.res-btn {
    float: left;
    width: 32px;
    height: 32px;
    margin-right: 18px;
}

.res-btn.gap {
    margin-left: 22px;
}

.res-btn:last-child {
    margin-right: 0;
}

.res-btn svg {
    width: 32px;
    height: 32px;
}

.summary {
    flex: 1;
    border-right: none;
    display: flex;
    flex-direction: column;
    white-space: nowrap;
}

.summary legend {
    width: 180px;
    margin-left: 83px;
    padding: 0;
    display: flex;
    align-items: center;
    font-size: 14px;
}

.summary input {
    appearance: none;
    width: 16px;
    height: 16px;
    margin: 0 3px 0 0;
    border: 5px solid #0060b8;
    border-radius: 50%;
    background: #fff;
}

.remaining {
    display: flex;
    align-items: center;
    gap: 4px;
    margin: 64px 0 0 12px;
    font-size: 12px;
}

.swatch {
    width: 26px;
    height: 17px;
    background: #0000ff;
    border: 1px solid #000;
}

.total {
    margin: 64px 0 0;
    text-align: right;
    font-weight: bold;
}

.hscroll {
    flex: none;
    height: 22px;
    padding: 7px 0 0 20px;
    border-top: 1px solid #fff;
}

.hthumb {
    width: 80.5%;
    height: 6px;
    background: #868686;
}

/* Specification pane */
.right-pane {
    flex: 1;
    min-width: 0;
    margin-left: 4px;
    display: flex;
    flex-direction: column;
    border-left: 2px solid #808080;
    border-top: 1px solid #696969;
    font-family: "Noto Sans", "Open Sans", sans-serif;
}

.doc-area {
    flex: 1;
    min-height: 0;
    display: flex;
    background: #fff;
    overflow: hidden;
}

.spec {
    flex: 1;
    display: grid;
    grid-template-columns: 160px 1fr;
    row-gap: 28px;
    align-content: start;
    margin: 0;
    padding: 17px 0 0 16px;
    font-size: 18px;
    line-height: 28px;
    white-space: nowrap;
}

.spec dd {
    margin: 0;
}

.spec ul {
    list-style: none;
    margin: 0;
    padding: 0;
}

.spec li {
    position: relative;
    padding-left: 30px;
    text-indent: 6px;
}

.spec li::before {
    content: "";
    position: absolute;
    left: 1px;
    top: 11px;
    width: 7px;
    height: 7px;
    border-radius: 50%;
    background: #000;
}

.spec li.small {
    font-size: 17px;
    line-height: 25px;
    text-indent: 5px;
}

.spec .sub li {
    padding-left: 21px;
    text-indent: 0;
}

.spec .sub li::before {
    top: 12px;
    width: 9px;
    height: 9px;
    background: none;
    border: 1px solid #000;
}

.vscroll {
    width: 30px;
    display: flex;
    flex-direction: column;
    background: #f0f0f0;
}

.vscroll button {
    display: flex;
    align-items: flex-end;
    height: 34px;
    padding: 0 0 7px 2px;
}

.vscroll .down {
    align-items: flex-start;
    height: 28px;
}

.vscroll svg {
    width: 18px;
    height: 12px;
}

.vtrack {
    flex: 1;
    padding-left: 1px;
}

.vthumb {
    width: 19px;
    height: 60%;
    background: #cdcdcd;
}

.tabs {
    flex: none;
    display: flex;
    height: 25px;
    padding: 3px 5px 0 0;
    font-family: "Open Sans", "Noto Sans", sans-serif;
    font-size: 13px;
    line-height: 18px;
}

.slant {
    width: 6px;
    height: 21px;
}

.tab {
    height: 21px;
    padding: 0 8px;
    border-top: 1px solid #000;
    border-bottom: 1px solid #808080;
    color: #000;
    text-decoration: none;
}

.tab.active {
    padding: 0 4px;
    border-top-color: #fff;
    background: #fff;
    font-weight: bold;
}

.tab-rest {
    flex: 1;
    border-top: 1px solid #000;
}

/* Status bar */
.statusbar {
    flex: none;
    display: flex;
    height: 20px;
    padding-top: 3px;
    border-top: 1px solid #d4d4d4;
    font-family: "Noto Sans", "Open Sans", sans-serif;
    font-size: 15px;
    line-height: 18px;
    white-space: nowrap;
}

.statusbar span {
    height: 16px;
    overflow: hidden;
    border-right: 1px solid #d4d4d4;
}

.s-user {
    flex: 1;
    text-align: right;
}

.s-state {
    width: 216px;
    padding-left: 4px;
}

.s-empty {
    width: 99px;
}

.s-chs {
    width: 116px;
    padding-left: 14px;
}

.s-com {
    width: 124px;
    padding-left: 14px;
}

.statusbar .s-leds {
    width: 42px;
    padding-left: 3px;
    border: none;
}

.s-leds svg {
    width: 34px;
    height: 14px;
}
```
